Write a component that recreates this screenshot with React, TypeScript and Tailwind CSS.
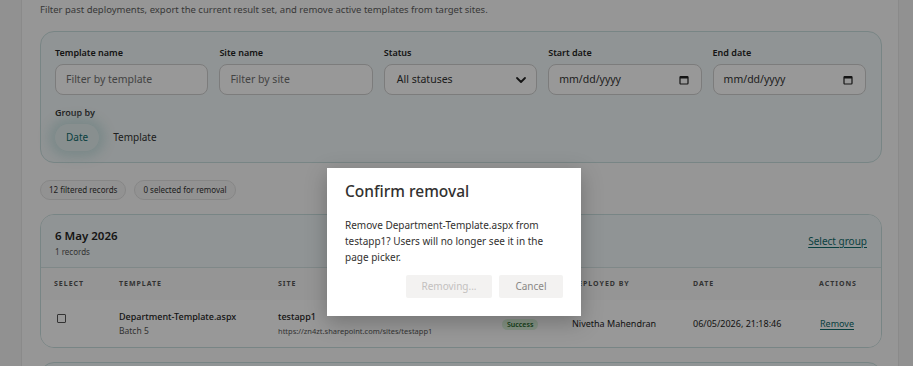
import React from "react";

const font = { fontFamily: '"Noto Sans", "Open Sans", sans-serif' };

function Field({ label, children }: { label: string; children: React.ReactNode }) {
  return (
    <div className="flex flex-col gap-[5px]">
      <span className="text-[9px] font-semibold leading-[12px] text-[#242424]">{label}</span>
      {children}
    </div>
  );
}

function TextInput({ placeholder }: { placeholder: string }) {
  return (
    <div className="h-[31px] rounded-[8px] border border-[#cfcfcf] bg-[#fdfdfd] px-[10px] flex items-center text-[10.5px] text-[#707070]">
      {placeholder}
    </div>
  );
}

function CalendarIcon() {
  return (
    <svg width="10" height="10" viewBox="0 0 10 10" className="text-[#222]">
      <rect x="1" y="1.5" width="8" height="7.5" rx="0.8" fill="none" stroke="currentColor" strokeWidth="1.2" />
      <rect x="1" y="1.5" width="8" height="2" fill="currentColor" />
    </svg>
  );
}

function DateInput() {
  return (
    <div className="h-[31px] rounded-[8px] border border-[#cfcfcf] bg-[#fdfdfd] pl-[10px] pr-[12px] flex items-center justify-between text-[10.5px] text-[#333]">
      <span>mm/dd/yyyy</span>
      <CalendarIcon />
    </div>
  );
}

export default function App() {
  return (
    <div style={font} className="relative w-full h-[366px] overflow-hidden bg-[#fafafa] flex">
      <div className="w-[22px] shrink-0 bg-[#f2f2f2] border-r border-[#e6e6e6]" />
      <div className="flex-1 min-w-0 pl-[18px] pr-[16px]">
        <p className="pt-[3px] text-[9.5px] leading-[14px] text-[#5e5e5e]">
          Filter past deployments, export the current result set, and remove active templates from target sites.
        </p>

        <div className="mt-[14px] rounded-[14px] border border-[#c9dede] bg-[#f1f7f8] pl-[14px] pr-[15px] pt-[15px] pb-[11px]">
          <div className="grid grid-cols-5 gap-[11px]">
            <Field label="Template name">
              <TextInput placeholder="Filter by template" />
            </Field>
            <Field label="Site name">
              <TextInput placeholder="Filter by site" />
            </Field>
            <Field label="Status">
              <div className="h-[31px] rounded-[8px] border border-[#cfcfcf] bg-[#fdfdfd] pl-[12px] pr-[8px] flex items-center justify-between text-[10.5px] text-[#333]">
                <span>All statuses</span>
                <svg width="14" height="14" viewBox="0 0 14 14">
                  <path d="M3 5 L7 9 L11 5" fill="none" stroke="#222" strokeWidth="1.8" strokeLinecap="round" strokeLinejoin="round" />
                </svg>
              </div>
            </Field>
            <Field label="Start date">
              <DateInput />
            </Field>
            <Field label="End date">
              <DateInput />
            </Field>
          </div>

          <div className="mt-[12px] text-[9px] font-semibold leading-[12px] text-[#242424]">Group by</div>
          <div className="mt-[5px] flex items-center gap-[8px] text-[10px]">
            <span className="rounded-full bg-[#e3efef] px-[11px] py-[6px] text-[#0f6b6b] shadow-[0_0_12px_6px_rgba(200,225,225,0.9)]">Date</span>
            <span className="px-[6px] py-[6px] text-[#333]">Template</span>
          </div>
        </div>

        <div className="mt-[17px] flex items-center gap-[8px]">
          <span className="rounded-full border border-[#e0e0e0] bg-[#f4f4f4] px-[8px] py-[3px] text-[8px] leading-[12px] text-[#333]">12 filtered records</span>
          <span className="rounded-full border border-[#e0e0e0] bg-[#f4f4f4] px-[8px] py-[3px] text-[8px] leading-[12px] text-[#333]">0 selected for removal</span>
        </div>

        <div className="mt-[14px] rounded-[14px] border border-[#c9dede] bg-[#fbfbfb] overflow-hidden">
          <div className="flex items-center justify-between bg-[#f1f7f8] border-b border-[#d4e3e3] pl-[14px] pr-[14px] h-[53px]">
            <div className="flex flex-col pt-[2px]">
              <span className="text-[11.5px] font-semibold leading-[15px] text-[#242424]">6 May 2026</span>
              <span className="mt-[3px] text-[8px] leading-[11px] text-[#555]">1 records</span>
            </div>
            <span className="text-[10px] text-[#0f6b6b] underline underline-offset-2">Select group</span>
          </div>
          <div className="grid grid-cols-[65px_159px_224px_70px_121px_126px_1fr] items-center h-[32px] px-[13px] text-[7px] font-bold tracking-[0.14em] text-[#555] bg-[#f8f8f8]">
            <span>SELECT</span>
            <span>TEMPLATE</span>
            <span>SITE</span>
            <span>STATUS</span>
            <span>DEPLOYED BY</span>
            <span>DATE</span>
            <span>ACTIONS</span>
          </div>
          <div className="grid grid-cols-[65px_159px_224px_70px_121px_126px_1fr] items-center h-[47px] px-[13px] bg-[#fdfdfd] text-[9px] text-[#242424]">
            <div className="pl-[3px]">
              <div className="w-[9px] h-[9px] border border-[#555] rounded-[1px] -mt-[10px]" />
            </div>
            <div className="flex flex-col">
              <span className="font-medium leading-[14px]">Department-Template.aspx</span>
              <span className="leading-[14px] text-[#555] text-[8.5px]">Batch 5</span>
            </div>
            <div className="flex flex-col">
              <span className="font-medium leading-[14px]">testapp1</span>
              <span className="leading-[14px] text-[#555] text-[7.5px]">https://zn4zt.sharepoint.com/sites/testapp1</span>
            </div>
            <div>
              <span className="rounded-full bg-[#dcf3dc] px-[5px] py-[1px] text-[7px] font-semibold text-[#1e6b2a]">Success</span>
            </div>
            <span>Nivetha Mahendran</span>
            <span>06/05/2026, 21:18:46</span>
            <span className="text-[#0f6b6b] underline underline-offset-2 pl-[1px]">Remove</span>
          </div>
        </div>

        <div className="mt-[14px] h-[40px] rounded-t-[14px] border border-[#c9dede] bg-[#f1f7f8]" />
      </div>
      <div className="w-[15px] shrink-0 bg-[#f2f2f2] border-l border-[#e6e6e6]" />

      <div className="absolute inset-0 bg-black/40" />
      <div className="absolute left-[327px] top-[168px] w-[254px] bg-white shadow-[0_6px_20px_rgba(0,0,0,0.25)] px-[18px] pt-[12px] pb-[18px]">
        <h2 className="text-[15.5px] font-medium leading-[22px] text-[#323130]">Confirm removal</h2>
        <p className="mt-[15px] text-[10px] leading-[16px] text-[#323130]">
          Remove Department-Template.aspx from testapp1? Users will no longer see it in the page picker.
        </p>
        <div className="mt-[10px] flex justify-end gap-[7px]">
          <button className="h-[23px] w-[86px] rounded-[2px] bg-[#f3f2f1] text-[10px] text-[#c3c1bf]">Removing...</button>
          <button className="h-[23px] w-[64px] rounded-[2px] bg-[#f3f2f1] text-[10px] text-[#8a8886]">Cancel</button>
        </div>
      </div>
    </div>
  );
}
